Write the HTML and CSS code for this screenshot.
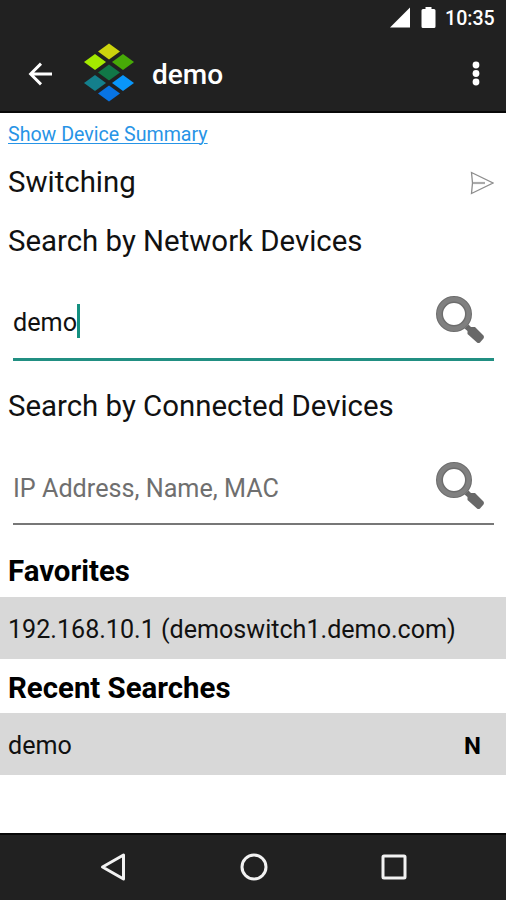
FILE: index.html
```html
<!DOCTYPE html>
<html lang="en">
<head>
<meta charset="utf-8">
<title>demo</title>
<link rel="stylesheet" href="styles.css">
</head>
<body>
<div class="screen">
  <div class="status">
    <svg width="22" height="22" viewBox="0 0 22 22"><path d="M1 20.500L21 .5v20z" fill="#fff"/></svg>
    <svg class="battery" width="15" height="22" viewBox="0 0 15 22"><path d="M4.500 0h6v2h2.500q1.500 0 1.500 1.500v16q0 1.500-1.500 1.500h-11q-1.500 0-1.500-1.500v-16q0-1.500 1.500-1.500h2.500z" fill="#fff"/></svg>
    <span class="clock">10:35</span>
  </div>
  <header class="appbar">
    <svg class="back" width="24" height="24" viewBox="0 0 24 24" fill="none" stroke="#fff" stroke-width="2.900"><path d="M13 1.600L2.600 12 13 22.400M2.300 12H24"/></svg>
    <svg class="logo" width="50" height="60" viewBox="0 0 50 60">
      <path d="M25 .5L36 8.500 25 16.500 14 8.500z" fill="#ccd40d"/>
      <path d="M11 11L22 19 11 27 0 19z" fill="#a4ea00"/>
      <path d="M39 11L50 19 39 27 28 19z" fill="#47aa07"/>
      <path d="M25 21.500L36 29.500 25 37.500 14 29.500z" fill="#117747"/>
      <path d="M11 32L22 40 11 48 0 40z" fill="#147f8c"/>
      <path d="M39 32L50 40 39 48 28 40z" fill="#0996fa"/>
      <path d="M25 42.500L36 50.500 25 58.500 14 50.500z" fill="#0874e4"/>
    </svg>
    <h1 class="title">demo</h1>
    <svg class="more" width="8" height="26" viewBox="0 0 8 26" fill="#fff"><circle cx="4" cy="4" r="3.400"/><circle cx="4" cy="12.500" r="3.400"/><circle cx="4" cy="21" r="3.400"/></svg>
  </header>
  <main class="content">
    <div class="summary"><a class="link" href="#">Show Device Summary</a></div>
    <div class="section switching"><span>Switching</span>
      <svg width="24" height="24" viewBox="0 0 24 24" fill="none" stroke="#8d8d8d" stroke-width="1.300"><path d="M1.500 1.500L23 12 1.500 22.500L2.500 12z"/><path d="M3 12h12" stroke-width="2.200" stroke="#aaa"/></svg>
    </div>
    <h2 class="section network"><span>Search by Network Devices</span></h2>
    <div class="field active"><span>demo</span><i class="caret"></i>
      <svg class="lens" width="50" height="50" viewBox="0 0 50 50"><path d="M29.500 33.500L33.500 29.500 36 32 40 32 48.500 40.500q1 1.500 0 3l-3.500 4q-1.500 1-3 0L32.500 39V36z" fill="#686868"/><circle cx="19" cy="19" r="14.500" fill="none" stroke="#6d6d6d" stroke-width="7"/><circle cx="19" cy="19" r="14.700" fill="none" stroke="#808080" stroke-width="4.500"/></svg>
    </div>
    <h2 class="section connected"><span>Search by Connected Devices</span></h2>
    <div class="field idle"><span class="hint">IP Address, Name, MAC</span>
      <svg class="lens" width="50" height="50" viewBox="0 0 50 50"><path d="M29.500 33.500L33.500 29.500 36 32 40 32 48.500 40.500q1 1.500 0 3l-3.500 4q-1.500 1-3 0L32.500 39V36z" fill="#686868"/><circle cx="19" cy="19" r="14.500" fill="none" stroke="#6d6d6d" stroke-width="7"/><circle cx="19" cy="19" r="14.700" fill="none" stroke="#808080" stroke-width="4.500"/></svg>
    </div>
    <h3 class="group favorites"><span>Favorites</span></h3>
    <div class="row"><span>192.168.10.1 (demoswitch1.demo.com)</span></div>
    <h3 class="group"><span>Recent Searches</span></h3>
    <div class="row"><span>demo</span><b class="flag">N</b></div>
  </main>
  <nav class="nav">
    <svg width="30" height="30" viewBox="0 0 30 30"><path d="M4.500 15L25.500 3v24z"/></svg>
    <svg width="30" height="30" viewBox="0 0 30 30"><circle cx="15" cy="15" r="12"/></svg>
    <svg width="30" height="30" viewBox="0 0 30 30"><rect x="4" y="4" width="22" height="22" rx="1"/></svg>
  </nav>
</div>
</body>
</html>
```
FILE: styles.css
```css
* { box-sizing: border-box; }
body { margin: 0; background: #fff; color: #111; font-family: Roboto, sans-serif; }
h1, h2, h3 { margin: 0; font-weight: 400; }
svg { display: block; flex: none; }
span, b { white-space: nowrap; }
.screen { width: 506px; height: 900px; display: flex; flex-direction: column; overflow: hidden; }
.status { height: 36px; background: #212121; display: flex; align-items: center; padding: 0 10px 0 389px; }
.battery { margin-left: 10px; }
.clock { margin-left: 9px; color: #fff; font-size: 19.6px; font-weight: 500; line-height: 36px; padding-top: 1px; }
.appbar { height: 77px; background: #212121; border-bottom: 2px solid #080808; display: flex; align-items: center; padding: 0 26px 0 28px; }
.logo { margin-left: 32px; margin-top: -1px; }
.title { margin-left: 18px; padding-top: 2px; color: #fff; font-size: 28px; font-weight: 500; line-height: 40px; }
.more { margin-left: auto; }
.content { flex: 1; }
.summary { height: 40px; padding: 10px 8px 0; font-size: 19.6px; line-height: 24px; }
.link { color: #2794e6; text-decoration-thickness: 1px; text-underline-offset: 2px; }
.section { height: 59px; display: flex; align-items: center; padding: 0 8px; font-size: 29.4px; line-height: 36px; }
.switching { justify-content: space-between; padding-right: 12px; }
.switching span, .network span { margin-top: -2px; }
.connected { height: 90px; }
.field { margin: 0 12px 0 13px; display: flex; align-items: center; font-size: 25.2px; }
.active { height: 90px; padding-top: 16px; border-bottom: 3px solid #218f82; }
.idle { height: 74px; padding-top: 3px; border-bottom: 2px solid #777; }
.caret { width: 3px; height: 34px; margin-top: -4px; background: #149080; }
.lens { margin-left: auto; margin-right: 9px; margin-top: -5px; }
.hint { color: #6f6f6f; }
.group { height: 54px; padding: 3px 8px 0; display: flex; align-items: center; font-size: 29.4px; font-weight: 700; color: #000; }
.favorites { height: 72px; padding-top: 20px; }
.row { height: 62px; background: #d8d8d8; padding: 2px 25px 0 8px; display: flex; align-items: center; justify-content: space-between; font-size: 25.1px; }
.flag { color: #000; font-size: 24px; padding-top: 2px; }
.nav { height: 67px; background: #212121; border-top: 2px solid #080808; display: flex; align-items: center; justify-content: space-between; padding: 0 97px 2px 98px; }
.nav svg { fill: none; stroke: #f2f2f2; stroke-width: 3; stroke-linejoin: round; }
```
